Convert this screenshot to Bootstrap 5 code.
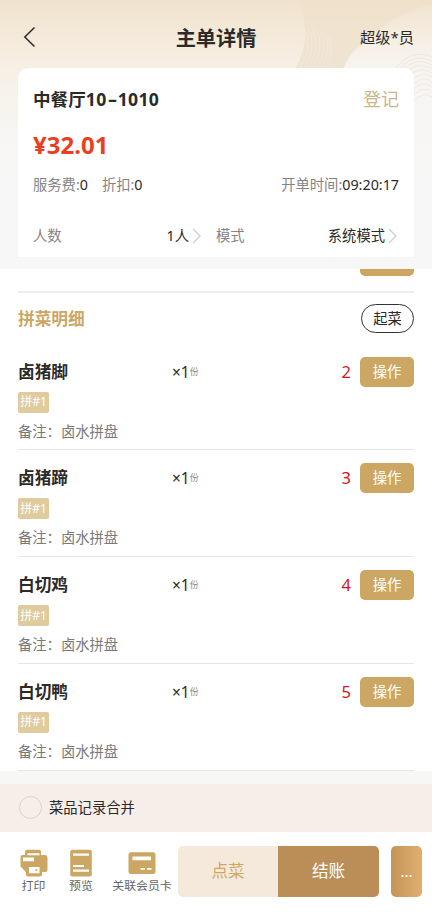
<!DOCTYPE html>
<html lang="zh-CN">
<head>
<meta charset="utf-8">
<meta name="viewport" content="width=device-width, initial-scale=1">
<title>主单详情</title>
<link href="https://cdn.jsdelivr.net/npm/bootstrap@5.3.0/dist/css/bootstrap.min.css" rel="stylesheet">
<style>
body{font-family:"Noto Sans","Noto Sans CJK SC",sans-serif;font-size:14.3px;line-height:20px;color:#2b2a29;background:#fff}
.screen{height:912px}
.hero{height:269px;background:linear-gradient(180deg,#f0e2cd 0,#f5ebdc 42px,#f7f3eb 90px,#f7f6f4 140px,#f7f7f7 190px)}
.hero-art{left:0;top:0}
.topbar{height:68px;padding:7px 18px 0}
.title{font-size:20.2px}
.user{font-size:15.2px;padding-bottom:2px}
.back{padding-bottom:2px}
.order{width:396px;height:189px;border-radius:10px 10px 0 0;padding:0 15px}
.r-name{height:62px;font-size:17.6px}
.r-name .num{letter-spacing:.35px}
.dash{display:inline-block;width:11px;text-align:center;letter-spacing:0;transform:scaleX(1.6)}
.state{color:#c8b68e;font-size:18px}
.r-price{height:31px;font-size:24px;color:#eb3e1e;padding-bottom:1px}
.r-fee{height:47px}
.off{margin-left:14px}
.r-mode{height:49px;padding-top:7px}
.half{width:168px}
.half-2{margin-left:15px;width:183px;padding-right:2px}
.soft{color:#858585}
.list-area{height:502px;padding:0 18px}
.cut{height:23.5px;border-bottom:2px solid #ededee}
.cut i{width:54px;height:7px;background:#cca560;border-radius:0 0 5px 5px}
.sec{height:51px}
.sec-t{color:#cba763;font-size:16.7px;padding-top:2px}
.pill{width:53px;height:29px;margin-top:1px;border:1.4px solid #333;border-radius:15px;font-size:14.3px}
.dish{height:106.8px;border-bottom:1px solid #e8e6e5;padding-top:13px}
.dish-top{height:30px}
.dish-name{width:154px;font-size:16.7px}
.qty{font-size:15.5px}
.unit{font-size:9px;color:#888}
.seq{color:#d01722;font-size:16.5px;margin-right:9px}
.op{width:54px;height:30px;background:#cca763;color:#fff;border-radius:5px;font-size:14.3px}
.tag{width:31px;height:21px;background:#dfcb9d;color:#fff;border-radius:2px;font-size:12px;margin-top:5px}
.note{margin-top:9px;color:#797979}
.merge{height:61px;border-top:13px solid #f7f7f5;background:#f7eee9;padding:0 0 1px 19px}
.ring{width:23px;height:23px;border:1.5px solid #ddd0cb;border-radius:50%;margin-right:7px}
.foot{height:80px;padding-bottom:1.5px}
.tool{font-size:11.9px;color:#666;line-height:16px}
.tool svg{display:block;height:28px;width:28px}
.t-print{width:67px}
.t-view{width:28px}
.t-card{width:60px;margin-left:17px}
.pair{margin-left:6px}
.b-order{width:100px;height:51px;background:#f5e9dc;color:#cda865;border-radius:5px 0 0 5px;font-size:16.6px}
.b-pay{width:101px;height:51px;background:#bb8e58;color:#fff;border-radius:0 5px 5px 0;font-size:16.6px}
.b-more{width:31px;height:51px;margin-left:12px;background:linear-gradient(90deg,#c59557,#dfae70);color:#fff;border-radius:5px;font-size:15px}
</style>
</head>
<body>
<div class="screen d-flex flex-column overflow-hidden">
  <header class="hero position-relative flex-shrink-0">
    <svg class="hero-art position-absolute" width="432" height="269" viewBox="0 0 432 269">
      <defs>
        <linearGradient id="fade" x1="0" y1="0" x2="0" y2="1"><stop offset="0" stop-color="#ead9bd" stop-opacity=".2"/><stop offset="1" stop-color="#e8dcc6" stop-opacity=".6"/></linearGradient>
        <linearGradient id="glow" gradientUnits="userSpaceOnUse" x1="0" y1="6" x2="0" y2="200"><stop offset="0" stop-color="#f7f4f0" stop-opacity="0"/><stop offset=".15" stop-color="#f7f4ef" stop-opacity=".3"/><stop offset=".35" stop-color="#f7f5f3" stop-opacity=".85"/><stop offset="1" stop-color="#f7f7f7"/></linearGradient>
      </defs>
      <path d="M298 0C309 28 307 50 294 70H343C346 58 355 48 368 38C384 24 400 12 432 4V0Z" fill="url(#fade)"/>
      <path d="M343 70C349 54 364 44 378 32C397 18 415 10 432 6V200H343Z" fill="url(#glow)"/>
      <g fill="none" stroke="#fff" stroke-opacity=".22" stroke-width=".7"><path d="M304 27Q314 48 299 69M308 27Q318 48 303 69M312 28Q322 48 307 69M316 29Q326 48 311 69M320 31Q330 49 315 69M324 33Q334 50 320 69M328 36Q337 51 324 69"/></g>
      <g fill="none" stroke="#e9e2d6" stroke-opacity=".8" stroke-width=".8"><path d="M396 68Q412 48 432 57M399 69Q415 52 432 61M402 70Q417 56 432 65M406 71Q420 61 432 69M411 74Q422 66 432 73M413 79Q423 71 432 77M413 84Q424 75 432 82M413 89Q424 80 432 87M413 95Q424 85 432 92M413 101Q424 91 432 97"/></g>
    </svg>
    <nav class="topbar position-relative d-flex align-items-center">
      <div class="col back"><svg class="d-block ms-1" width="16" height="22" viewBox="0 0 16 22" fill="none" stroke="#2b2927" stroke-width="1.5"><path d="M12.500 1.500 2.800 11l9.700 9.500"/></svg></div>
      <b class="title">主单详情</b>
      <div class="col text-end user">超级*员</div>
    </nav>
    <section class="order position-relative bg-white mx-auto">
      <div class="r-name d-flex align-items-center justify-content-between"><b>中餐厅<span class="num">10<span class="dash">-</span>1010</span></b><span class="state">登记</span></div>
      <div class="r-price d-flex align-items-center fw-bold">¥32.01</div>
      <div class="r-fee d-flex align-items-center"><span class="soft">服务费:</span>0<span class="soft off">折扣:</span>0<span class="soft ms-auto">开单时间:</span>09:20:17</div>
      <div class="r-mode d-flex align-items-center">
        <div class="half d-flex align-items-center"><span class="soft">人数</span><span class="ms-auto">1人</span>
          <svg width="12" height="16" viewBox="0 0 12 16" fill="none" stroke="#d0d0d0" stroke-width="1.4"><path d="m4 1 7 7-7 7"/></svg></div>
        <div class="half-2 d-flex align-items-center"><span class="soft">模式</span><span class="ms-auto">系统模式</span>
          <svg width="12" height="16" viewBox="0 0 12 16" fill="none" stroke="#d0d0d0" stroke-width="1.4"><path d="m4 1 7 7-7 7"/></svg></div>
      </div>
    </section>
  </header>
  <main class="list-area flex-shrink-0 overflow-hidden">
    <div class="cut d-flex justify-content-end"><i></i></div>
    <div class="sec d-flex align-items-center justify-content-between"><b class="sec-t">拼菜明细</b><span class="pill d-flex align-items-center justify-content-center">起菜</span></div>
    <article class="dish"><div class="dish-top d-flex align-items-center"><b class="dish-name">卤猪脚</b><span class="qty">×1</span><span class="unit">份</span><span class="seq ms-auto">2</span><span class="op d-flex align-items-center justify-content-center">操作</span></div><div class="tag d-flex align-items-center justify-content-center">拼#1</div><div class="note">备注：卤水拼盘</div></article>
    <article class="dish"><div class="dish-top d-flex align-items-center"><b class="dish-name">卤猪蹄</b><span class="qty">×1</span><span class="unit">份</span><span class="seq ms-auto">3</span><span class="op d-flex align-items-center justify-content-center">操作</span></div><div class="tag d-flex align-items-center justify-content-center">拼#1</div><div class="note">备注：卤水拼盘</div></article>
    <article class="dish"><div class="dish-top d-flex align-items-center"><b class="dish-name">白切鸡</b><span class="qty">×1</span><span class="unit">份</span><span class="seq ms-auto">4</span><span class="op d-flex align-items-center justify-content-center">操作</span></div><div class="tag d-flex align-items-center justify-content-center">拼#1</div><div class="note">备注：卤水拼盘</div></article>
    <article class="dish"><div class="dish-top d-flex align-items-center"><b class="dish-name">白切鸭</b><span class="qty">×1</span><span class="unit">份</span><span class="seq ms-auto">5</span><span class="op d-flex align-items-center justify-content-center">操作</span></div><div class="tag d-flex align-items-center justify-content-center">拼#1</div><div class="note">备注：卤水拼盘</div></article>
  </main>
  <div class="merge d-flex align-items-center flex-shrink-0"><span class="ring"></span>菜品记录合并</div>
  <footer class="foot bg-white d-flex align-items-center">
    <div class="tool t-print d-flex flex-column align-items-center">
      <svg viewBox="0 0 28 28"><path fill="#cca763" d="M7 .8h12a2 2 0 0 1 2 2V6h3.500a3 3 0 0 1 3 3v12a2 2 0 0 1-2 2H22v2.500a2 2 0 0 1-2 2H8a2 2 0 0 1-2-2V23L.5 17.500V8a2 2 0 0 1 2-2H5V2.800a2 2 0 0 1 2-2Z"/><path fill="#fff" d="M7.500 4.200h12v2h-12zM3 8.500h11v3.800H3zM9 18h10.500v6.300H9z"/><circle cx="16.300" cy="21" r="1" fill="#cca763"/></svg>打印</div>
    <div class="tool t-view d-flex flex-column align-items-center">
      <svg viewBox="0 0 28 28"><rect x="3.200" y=".8" width="21.600" height="26.700" rx="2" fill="#cca763"/><path fill="#fff" d="M6 4.500h16v2.300H6zM6 16h11v1.900H6zM6 20.500h16v2.200H6z"/></svg><span class="text-nowrap">预览</span></div>
    <div class="tool t-card d-flex flex-column align-items-center">
      <svg viewBox="0 0 28 28"><rect x=".5" y="3.300" width="27" height="21.700" rx="2.500" fill="#cca763"/><path fill="#fff" d="M4.500 7.500h18.500v3.800H4.500zM12.500 19h4.500v1.700h-4.500zM19 19h4.500v1.700H19z"/></svg>关联会员卡</div>
    <div class="pair d-flex"><span class="b-order d-flex align-items-center justify-content-center">点菜</span><span class="b-pay d-flex align-items-center justify-content-center">结账</span></div>
    <span class="b-more d-flex align-items-center justify-content-center">...</span>
  </footer>
</div>
<script src="https://cdn.jsdelivr.net/npm/bootstrap@5.3.0/dist/js/bootstrap.bundle.min.js"></script>
</body>
</html>
